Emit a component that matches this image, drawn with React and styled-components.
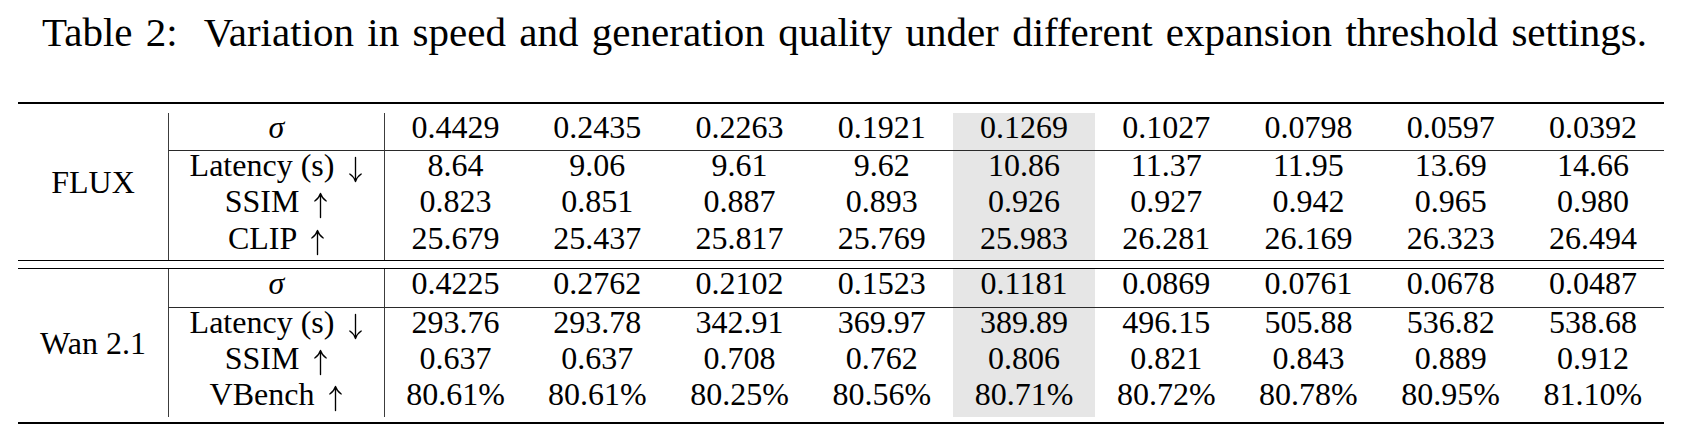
import React from "react";
import styled, { createGlobalStyle } from "styled-components";

const Global = createGlobalStyle`
  html, body { margin: 0; padding: 0; background: #ffffff; }
  body { font-family: "Liberation Serif", "Times New Roman", serif; color: #000; }
`;

const Page = styled.div`
  width: 1693px;
  height: 447px;
  overflow: hidden;
  background: #fff;
`;

const Caption = styled.div`
  margin-top: 8px;
  height: 48px;
  line-height: 48px;
  font-size: 41px;
  text-align: center;
  white-space: nowrap;
  word-spacing: 3.1px;
  padding-right: 4px;
`;

const Table = styled.div`
  margin: 45.5px 0 0 18px;
  width: 1646px;
`;

const Rule = styled.div`
  height: ${(p) => p.$h}px;
  background: #000;
  margin-top: ${(p) => p.$mt || 0}px;
`;

const Block = styled.div`
  display: grid;
  grid-template-columns: 150px 216px repeat(9, 1fr);
  grid-template-rows: 38.5px 36.33px 36.33px 36.34px;
  margin-top: ${(p) => p.$mt || 0}px;
  font-size: 32px;
`;

const ModelCell = styled.div`
  grid-row: 1 / span 4;
  display: flex;
  align-items: center;
  justify-content: center;
  line-height: 28px;
  white-space: nowrap;
  padding-bottom: ${(p) => p.$lift || 0}px;
`;

const Cell = styled.div`
  line-height: 28px;
  text-align: center;
  white-space: nowrap;
  background: ${(p) => (p.$hl ? "#e6e6e6" : "transparent")};
  border-left: ${(p) => (p.$vline ? "1.3px solid #3c3c3c" : "none")};
  border-bottom: ${(p) => (p.$sep ? "1px solid #2a2a2a" : "none")};
`;

const Sigma = styled.span`
  font-style: italic;
`;

const ArrowSvg = styled.svg`
  width: 13px;
  height: 25px;
  margin: 0 1px 0 7px;
  vertical-align: -6px;
  overflow: visible;
`;

function Arrow({ dir }) {
  const d =
    dir === "up"
      ? "M6.5 24.5 V0.8 M0.8 8 Q5 5.2 6.5 0.5 Q8 5.2 12.2 8"
      : "M6.5 0.5 V24.2 M0.8 17 Q5 19.8 6.5 24.5 Q8 19.8 12.2 17";
  return (
    <ArrowSvg viewBox="0 0 13 25">
      <path d={d} fill="none" stroke="#000" strokeWidth="1.35" strokeLinecap="round" strokeLinejoin="round" />
    </ArrowSvg>
  );
}

const HL_COL = 4;

const blocks = [
  {
    name: "FLUX",
    lift: 8,
    rows: [
      { label: <Sigma>σ</Sigma>, vals: ["0.4429", "0.2435", "0.2263", "0.1921", "0.1269", "0.1027", "0.0798", "0.0597", "0.0392"] },
      { label: <>Latency (s) <Arrow dir="down" /></>, vals: ["8.64", "9.06", "9.61", "9.62", "10.86", "11.37", "11.95", "13.69", "14.66"] },
      { label: <>SSIM <Arrow dir="up" /></>, vals: ["0.823", "0.851", "0.887", "0.893", "0.926", "0.927", "0.942", "0.965", "0.980"] },
      { label: <>CLIP <Arrow dir="up" /></>, vals: ["25.679", "25.437", "25.817", "25.769", "25.983", "26.281", "26.169", "26.323", "26.494"] },
    ],
  },
  {
    name: "Wan 2.1",
    lift: 0,
    rows: [
      { label: <Sigma>σ</Sigma>, vals: ["0.4225", "0.2762", "0.2102", "0.1523", "0.1181", "0.0869", "0.0761", "0.0678", "0.0487"] },
      { label: <>Latency (s) <Arrow dir="down" /></>, vals: ["293.76", "293.78", "342.91", "369.97", "389.89", "496.15", "505.88", "536.82", "538.68"] },
      { label: <>SSIM <Arrow dir="up" /></>, vals: ["0.637", "0.637", "0.708", "0.762", "0.806", "0.821", "0.843", "0.889", "0.912"] },
      { label: <>VBench <Arrow dir="up" /></>, vals: ["80.61%", "80.61%", "80.25%", "80.56%", "80.71%", "80.72%", "80.78%", "80.95%", "81.10%"] },
    ],
  },
];

function ModelBlock({ data, mt }) {
  return (
    <Block $mt={mt}>
      <ModelCell $lift={data.lift}>{data.name}</ModelCell>
      {data.rows.map((row, ri) => (
        <React.Fragment key={ri}>
          <Cell $vline $sep={ri === 0}>{row.label}</Cell>
          {row.vals.map((v, ci) => (
            <Cell key={ci} $vline={ci === 0} $sep={ri === 0} $hl={ci === HL_COL}>
              {v}
            </Cell>
          ))}
        </React.Fragment>
      ))}
    </Block>
  );
}

export default function App() {
  return (
    <Page>
      <Global />
      <Caption>
        Table 2:&nbsp; Variation in speed and generation quality under different expansion threshold settings.
      </Caption>
      <Table>
        <Rule $h={2} />
        <ModelBlock data={blocks[0]} mt={9} />
        <Rule $h={1} />
        <Rule $h={1} $mt={7.3} />
        <ModelBlock data={blocks[1]} />
        <Rule $h={2} $mt={5.7} />
      </Table>
    </Page>
  );
}
